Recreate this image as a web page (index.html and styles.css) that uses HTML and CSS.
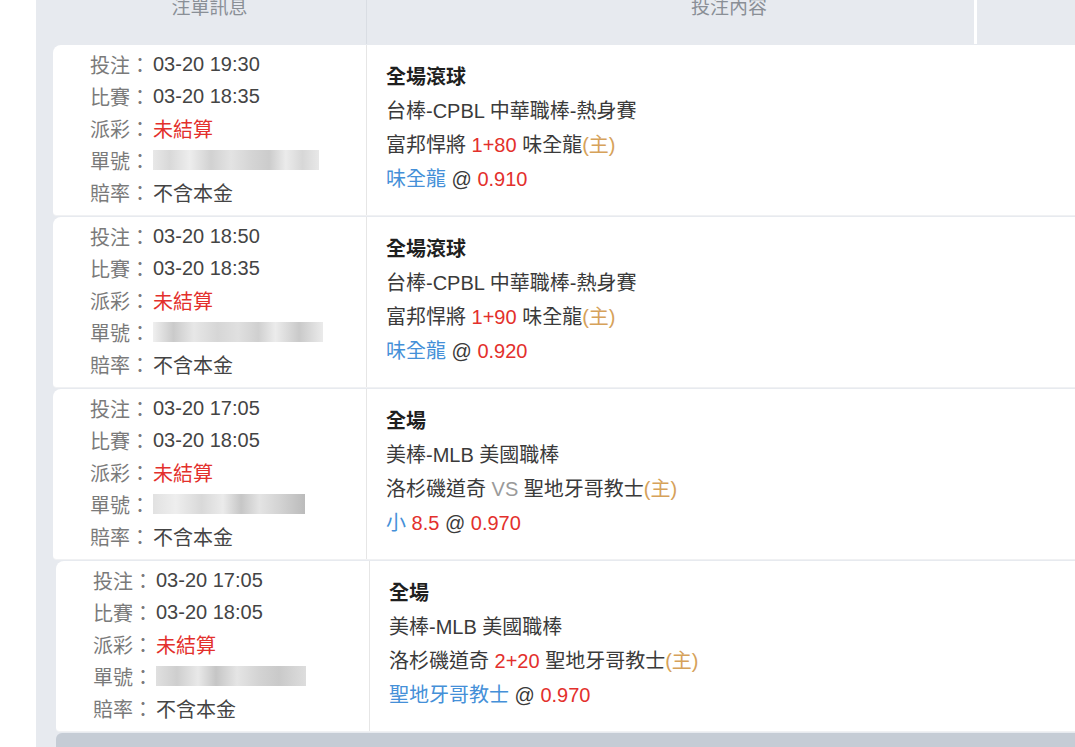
FILE: index.html
```html
<html>
  <head>
    <title>注單紀錄</title>
    <link rel="stylesheet" href="styles.css">
  </head>
  <body>
    <div id="panel">
      <div class="head">
        <div class="head-info"><span>注單訊息</span></div>
        <div class="head-bet"><span>投注內容</span></div>
        <div class="head-more"></div>
      </div>

      <div class="ticket">
        <div class="info">
          <div class="row"><span class="label">投注：</span><span class="val">03-20 19:30</span></div>
          <div class="row"><span class="label">比賽：</span><span class="val">03-20 18:35</span></div>
          <div class="row"><span class="label">派彩：</span><span class="val red">未結算</span></div>
          <div class="row"><span class="label">單號：</span><span class="blur b1"></span></div>
          <div class="row"><span class="label">賠率：</span><span class="val">不含本金</span></div>
        </div>
        <div class="bet">
          <div class="title">全場滾球</div>
          <div>台棒-CPBL 中華職棒-熱身賽</div>
          <div>富邦悍將 <span class="red">1+80</span> 味全龍<span class="home">(主)</span></div>
          <div><span class="blue">味全龍</span> @ <span class="red">0.910</span></div>
        </div>
      </div>

      <div class="ticket">
        <div class="info">
          <div class="row"><span class="label">投注：</span><span class="val">03-20 18:50</span></div>
          <div class="row"><span class="label">比賽：</span><span class="val">03-20 18:35</span></div>
          <div class="row"><span class="label">派彩：</span><span class="val red">未結算</span></div>
          <div class="row"><span class="label">單號：</span><span class="blur b2"></span></div>
          <div class="row"><span class="label">賠率：</span><span class="val">不含本金</span></div>
        </div>
        <div class="bet">
          <div class="title">全場滾球</div>
          <div>台棒-CPBL 中華職棒-熱身賽</div>
          <div>富邦悍將 <span class="red">1+90</span> 味全龍<span class="home">(主)</span></div>
          <div><span class="blue">味全龍</span> @ <span class="red">0.920</span></div>
        </div>
      </div>

      <div class="ticket">
        <div class="info">
          <div class="row"><span class="label">投注：</span><span class="val">03-20 17:05</span></div>
          <div class="row"><span class="label">比賽：</span><span class="val">03-20 18:05</span></div>
          <div class="row"><span class="label">派彩：</span><span class="val red">未結算</span></div>
          <div class="row"><span class="label">單號：</span><span class="blur b3"></span></div>
          <div class="row"><span class="label">賠率：</span><span class="val">不含本金</span></div>
        </div>
        <div class="bet">
          <div class="title">全場</div>
          <div>美棒-MLB 美國職棒</div>
          <div>洛杉磯道奇 <span class="vs">VS</span> 聖地牙哥教士<span class="home">(主)</span></div>
          <div><span class="blue">小</span> <span class="red">8.5</span> @ <span class="red">0.970</span></div>
        </div>
      </div>

      <div class="ticket shifted">
        <div class="info">
          <div class="row"><span class="label">投注：</span><span class="val">03-20 17:05</span></div>
          <div class="row"><span class="label">比賽：</span><span class="val">03-20 18:05</span></div>
          <div class="row"><span class="label">派彩：</span><span class="val red">未結算</span></div>
          <div class="row"><span class="label">單號：</span><span class="blur b4"></span></div>
          <div class="row"><span class="label">賠率：</span><span class="val">不含本金</span></div>
        </div>
        <div class="bet">
          <div class="title">全場</div>
          <div>美棒-MLB 美國職棒</div>
          <div>洛杉磯道奇 <span class="red">2+20</span> 聖地牙哥教士<span class="home">(主)</span></div>
          <div><span class="blue">聖地牙哥教士</span> @ <span class="red">0.970</span></div>
        </div>
      </div>

      <div class="footer-bar"></div>
    </div>
  </body>
</html>
```

FILE: styles.css
```css
body {
  margin: 0;
  background: white;
  font-family: "Liberation Sans", "Noto Sans CJK TC", sans-serif;
  font-size: 20px;
  color: #333333;
  overflow: hidden;
}
#panel {
  margin-left: 36px;
  padding-left: 17px;
  background: #e7eaef;
  height: 747px;
  width: 1100px;
}
.head {
  display: flex;
  height: 44px;
  color: #8a8f96;
  font-size: 19px;
}
.head span {
  display: block;
  margin-top: -2px;
  line-height: 20px;
}
.head-info {
  width: 313px;
  text-align: center;
  border-right: 1px solid #d9dde3;
}
.head-bet {
  width: 610px;
  text-align: center;
  padding-left: 117px;
  box-sizing: border-box;
  border-right: 3px solid #ffffff;
}
.head-more {
  flex: 1;
}
.ticket {
  display: flex;
  background: white;
  height: 170px;
  margin-top: 1px;
  margin-bottom: 1px;
  border-top-left-radius: 8px;
  border-bottom-left-radius: 4px;
  border-bottom: 1px solid #f0f1f3;
}
.ticket.shifted {
  margin-left: 3px;
}
.info {
  width: 276px;
  padding-left: 37px;
  padding-top: 3px;
  border-right: 1px solid #e6e6e6;
}
.row {
  display: flex;
  align-items: center;
  height: 32px;
}
.label {
  width: 63px;
  color: #7a7a7a;
}
.val {
  color: #444444;
}
.blur {
  display: inline-block;
  height: 20px;
  opacity: 0.8;
}
.b1 {
  width: 166px;
  background: linear-gradient(90deg, #e2e2e2 0, #cfcfcf 10%, #e9e9e9 22%, #c6c6c6 35%, #dcdcdc 47%, #c9c9c9 60%, #bfbfbf 70%, #e6e6e6 80%, #cdcdcd 90%, #e2e2e2 100%);
}
.b2 {
  width: 170px;
  background: linear-gradient(90deg, #ececec 0, #bdbdbd 12%, #e1e1e1 24%, #cccccc 38%, #d8d8d8 50%, #c4c4c4 62%, #e7e7e7 72%, #bcbcbc 86%, #e6e6e6 100%);
}
.b3 {
  width: 152px;
  background: linear-gradient(90deg, #dadada 0, #eaeaea 15%, #cfcfcf 32%, #e6e6e6 46%, #b8b8b8 58%, #dddddd 70%, #c7c7c7 84%, #aaaaaa 100%);
}
.b4 {
  width: 150px;
  background: linear-gradient(90deg, #d8d8d8 0, #c2c2c2 14%, #e3e3e3 28%, #b7b7b7 40%, #dedede 54%, #c9c9c9 68%, #bcbcbc 82%, #d5d5d5 100%);
}
.bet {
  padding-left: 19px;
  padding-top: 15px;
  flex: 1;
}
.bet div {
  height: 34px;
  line-height: 34px;
  color: #3a3a3a;
}
.bet .title {
  font-weight: bold;
  color: #1f1f1f;
  font-size: 20px;
}
.red {
  color: #e3302c;
}
.blue {
  color: #4590d8;
}
.home {
  color: #d6a25a;
}
.vs {
  color: #9a9a9a;
}
.footer-bar {
  margin-left: 3px;
  height: 20px;
  background: #c5ccd5;
  border-top-left-radius: 6px;
}
```
